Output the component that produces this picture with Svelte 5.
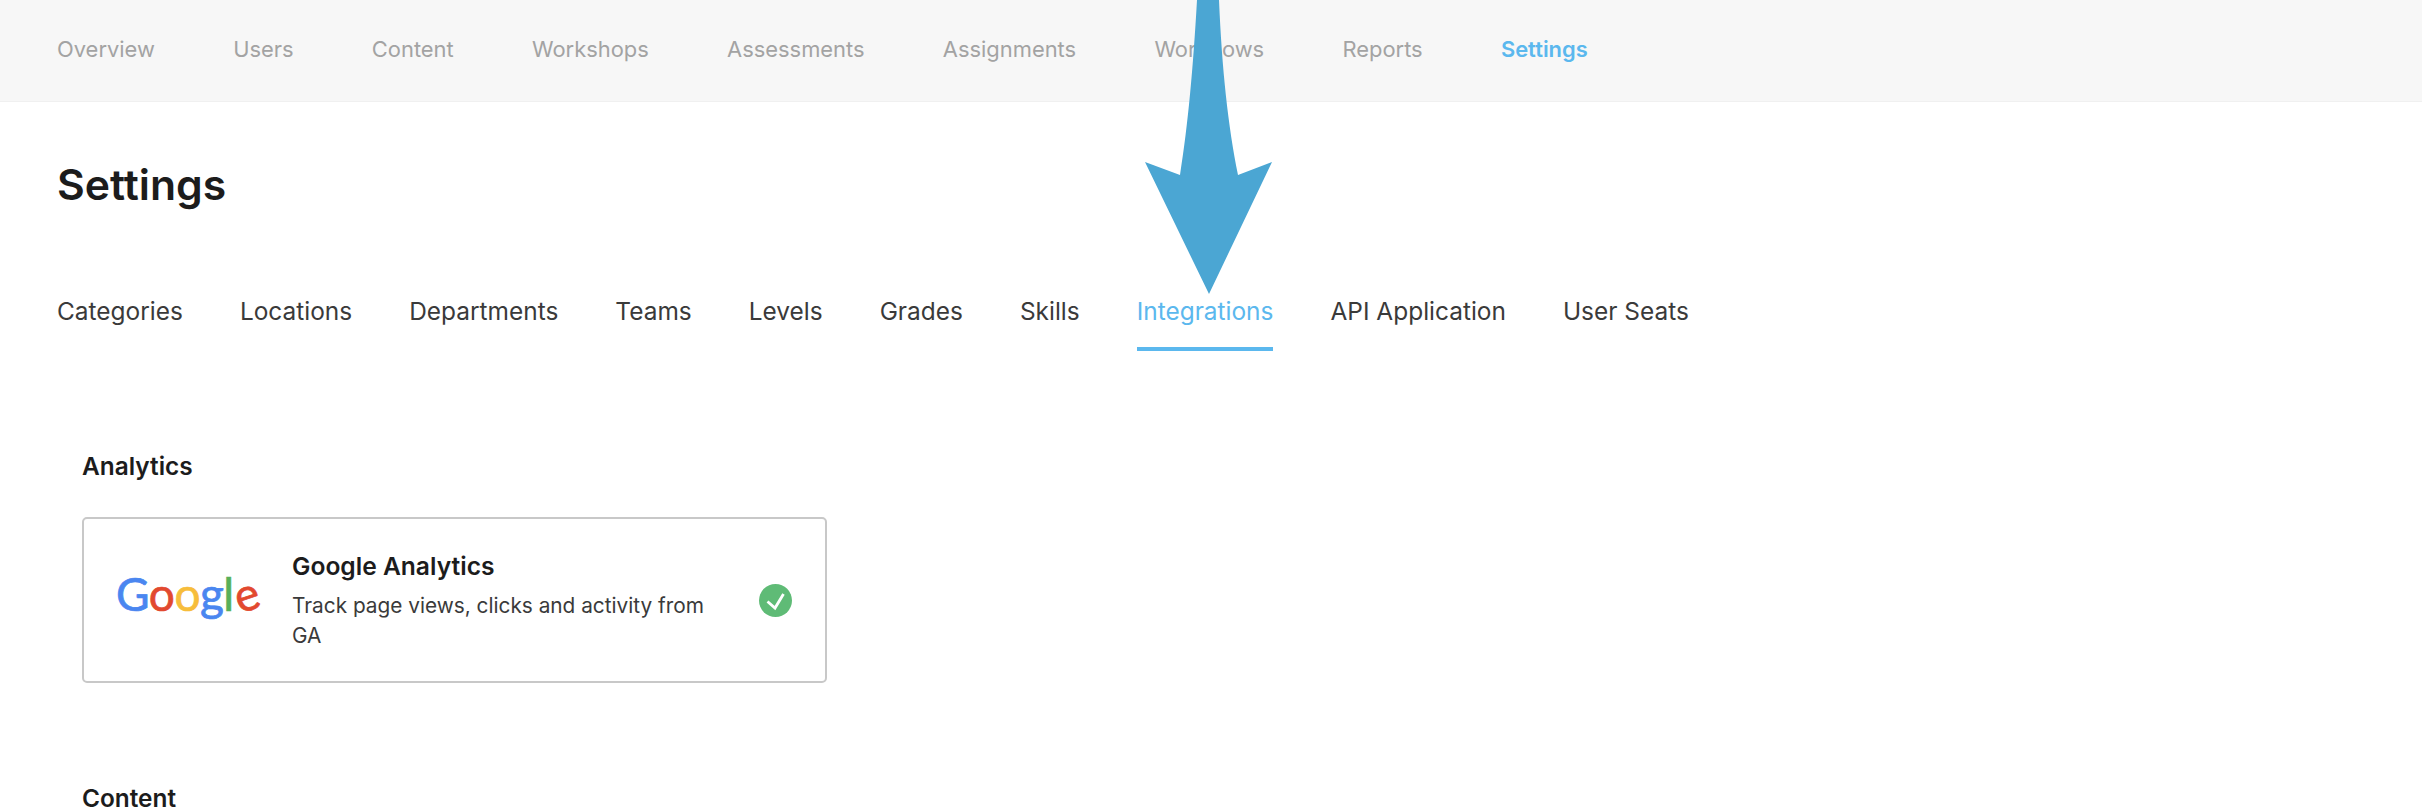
<script>
  const navItems = ['Overview', 'Users', 'Content', 'Workshops', 'Assessments', 'Assignments', 'Workflows', 'Reports', 'Settings'];
  const tabs = ['Categories', 'Locations', 'Departments', 'Teams', 'Levels', 'Grades', 'Skills', 'Integrations', 'API Application', 'User Seats'];
  const googleLetters = [
    { ch: 'G', color: '#4a86f0' },
    { ch: 'o', color: '#e2492f' },
    { ch: 'o', color: '#f7bd3b' },
    { ch: 'g', color: '#4a86f0' },
    { ch: 'l', color: '#58b058' },
    { ch: 'e', color: '#e2492f' }
  ];
</script>

<div class="page">
  <nav class="topnav">
    {#each navItems as item}
      <span class="nav-item" class:active={item === 'Settings'}>{item}</span>
    {/each}
  </nav>

  <main class="content">
    <h1 class="title">Settings</h1>

    <div class="tabs">
      {#each tabs as tab}
        <span class="tab" class:active={tab === 'Integrations'}>{tab}</span>
      {/each}
    </div>

    <section class="section">
      <h2 class="section-title">Analytics</h2>
      <div class="card">
        <div class="logo">
          {#each googleLetters as letter}
            <span class:tilt={letter.ch === 'e'} style="color: {letter.color}">{letter.ch}</span>
          {/each}
        </div>
        <div class="card-body">
          <div class="card-title">Google Analytics</div>
          <p class="card-desc">Track page views, clicks and activity from GA</p>
        </div>
        <svg class="check" viewBox="0 0 33 33" width="33" height="33">
          <circle cx="16.5" cy="16.5" r="16.5" fill="#5fbb76" />
          <path d="M8.5 17.5l7.5 6.5 8.5-14" fill="none" stroke="#fff" stroke-width="2.8" />
        </svg>
      </div>
    </section>

    <section class="section second">
      <h2 class="section-title">Content</h2>
    </section>
  </main>

  <!-- annotation arrow over the page -->
  <svg class="arrow" viewBox="0 0 140 296" width="140" height="296">
    <path d="M57 0 L79 0 C82 70 88 125 98 175 L132 162 L69 294 L5 162 L40 175 C48 125 53 70 57 0 Z" fill="#4ba6d3" />
  </svg>
</div>

<style>
  :global(body) {
    margin: 0;
    background: #fff;
  }

  .page {
    position: relative;
    height: 808px;
    overflow: hidden;
    font-family: Inter, "Liberation Sans", sans-serif;
  }

  .topnav {
    display: flex;
    align-items: center;
    gap: 78.3px;
    box-sizing: border-box;
    height: 102px;
    padding: 0 0 3px 57px;
    background: #f7f7f7;
    border-bottom: 1px solid #f0f0f0;
  }

  .nav-item {
    font-size: 21.9px;
    color: #a3a3a3;
  }

  .nav-item.active {
    color: #5bb8ee;
    font-weight: 600;
  }

  .content {
    padding: 58px 0 0 57px;
  }

  .title {
    margin: 0;
    font-size: 42.7px;
    line-height: 50px;
    font-weight: 600;
    color: #1c1c1c;
  }

  .tabs {
    display: flex;
    gap: 57px;
    margin-top: 86px;
  }

  .tab {
    padding-bottom: 21px;
    border-bottom: 4px solid transparent;
    font-size: 24.45px;
    line-height: 30px;
    color: #3a3a3a;
  }

  .tab.active {
    color: #5bb8ee;
    border-bottom-color: #5bb8ee;
  }

  .section {
    margin: 104px 0 0 25px;
  }

  .section.second {
    margin-top: 104px;
  }

  .section-title {
    margin: 0 0 40px;
    font-size: 24.4px;
    line-height: 22px;
    font-weight: 600;
    color: #1c1c1c;
  }

  .card {
    display: flex;
    align-items: center;
    box-sizing: border-box;
    width: 745px;
    height: 166px;
    padding: 0 33px 0 32px;
    border: 2px solid #c8c8c8;
    border-radius: 5px;
  }

  .logo {
    width: 176px;
    flex: none;
    margin-top: -12px;
    font-family: Lato, sans-serif;
    font-size: 46px;
    letter-spacing: -0.5px;
    line-height: 60px;
    -webkit-text-stroke: 0.7px currentColor;
  }

  .tilt {
    display: inline-block;
    transform: rotate(-18deg);
  }

  .card-body {
    flex: 1;
    padding-top: 2px;
  }

  .card-title {
    font-size: 24.6px;
    line-height: 30px;
    font-weight: 600;
    color: #1c1c1c;
  }

  .card-desc {
    width: 430px;
    margin: 10px 0 0;
    font-size: 20.8px;
    line-height: 30px;
    color: #3a3a3a;
  }

  .check {
    flex: none;
  }

  .arrow {
    position: absolute;
    top: 0;
    left: 1140px;
  }
</style>
